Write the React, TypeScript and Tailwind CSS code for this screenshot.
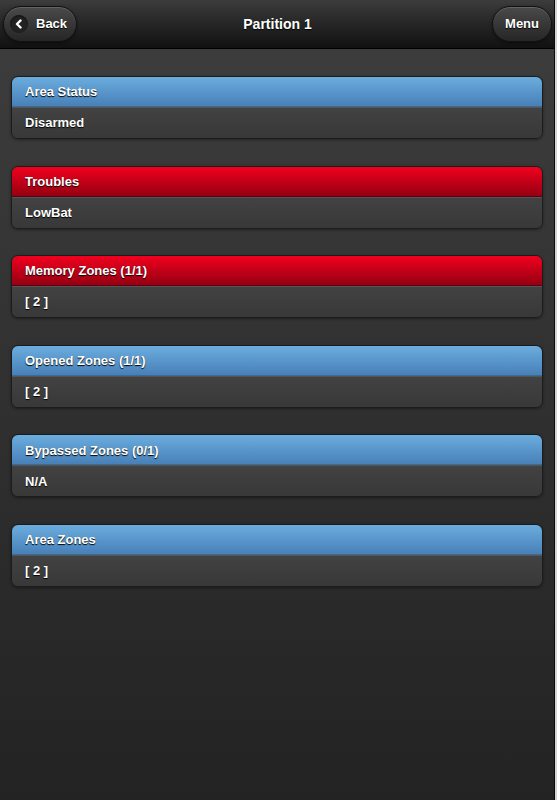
import React from "react";

type Card = { title: string; body: string; red?: boolean };

const cards: Card[] = [
  { title: "Area Status", body: "Disarmed" },
  { title: "Troubles", body: "LowBat", red: true },
  { title: "Memory Zones (1/1)", body: "[ 2 ]", red: true },
  { title: "Opened Zones (1/1)", body: "[ 2 ]" },
  { title: "Bypassed Zones (0/1)", body: "N/A" },
  { title: "Area Zones", body: "[ 2 ]" },
];

const shadow = "[text-shadow:0_1px_1px_#000]";

export default function App() {
  return (
    <div
      className="flex h-[800px] w-[557px] overflow-hidden"
      style={{ fontFamily: '"Liberation Sans", Arial, sans-serif' }}
    >
      <div className="flex w-[554px] flex-col bg-gradient-to-b from-[#3e3e3e] to-[#232323]">
        <header className="grid h-[49px] grid-cols-[1fr_auto_1fr] items-center border-b border-[#000] bg-gradient-to-b from-[#3c3c3c] to-[#111] pl-[3px] pr-[2px]">
          <div className="flex">
            <button className="flex h-[36px] items-center gap-[8px] rounded-full border border-[#111] bg-gradient-to-b from-[#4a4a4a] to-[#262626] pl-[6px] pr-[9px] shadow-[0_1px_3px_rgba(0,0,0,0.5),inset_0_1px_0_rgba(255,255,255,0.15)]">
              <span className="flex h-[18px] w-[18px] items-center justify-center rounded-full bg-[#222] shadow-[inset_0_1px_2px_rgba(0,0,0,0.6)]">
                <svg width="10" height="10" viewBox="0 0 10 10">
                  <path d="M6.5 1.5 L3 5 L6.5 8.5" fill="none" stroke="#fff" strokeWidth="2.4" strokeLinecap="round" strokeLinejoin="round" />
                </svg>
              </span>
              <span className={`text-[13px] font-bold text-white ${shadow}`}>Back</span>
            </button>
          </div>
          <h1 className={`text-[14px] font-bold text-white ${shadow}`}>Partition 1</h1>
          <div className="flex justify-end">
            <button className="flex h-[36px] items-center rounded-full border border-[#111] bg-gradient-to-b from-[#4a4a4a] to-[#262626] px-[12px] shadow-[0_1px_3px_rgba(0,0,0,0.5),inset_0_1px_0_rgba(255,255,255,0.15)]">
              <span className={`text-[13px] font-bold text-white ${shadow}`}>Menu</span>
            </button>
          </div>
        </header>
        <main className="flex flex-col gap-[26.6px] px-[11px] pt-[27px]">
          {cards.map((c) => (
            <section
              key={c.title}
              className="overflow-hidden rounded-[7px] border border-[#1c1c1c] shadow-[0_1px_3px_rgba(0,0,0,0.4)]"
            >
              <div
                className={`flex h-[30px] items-center border-b px-[13px] pt-[1px] ${
                  c.red
                    ? "border-[#5a0010] bg-gradient-to-b from-[#f2001e] to-[#950012]"
                    : "border-[#3d6a94] bg-gradient-to-b from-[#6badde] to-[#4880b8]"
                }`}
              >
                <span className={`text-[13px] font-bold text-white ${shadow}`}>{c.title}</span>
              </div>
              <div className="flex h-[31px] items-center border-t border-[#555] bg-gradient-to-b from-[#424242] to-[#383838] px-[13px]">
                <span className={`text-[13px] font-bold text-white ${shadow}`}>{c.body}</span>
              </div>
            </section>
          ))}
        </main>
      </div>
      <div className="w-[1px] bg-[#0a0a0a]" />
      <div className="w-[2px] bg-[#d4d4d4]" />
    </div>
  );
}
